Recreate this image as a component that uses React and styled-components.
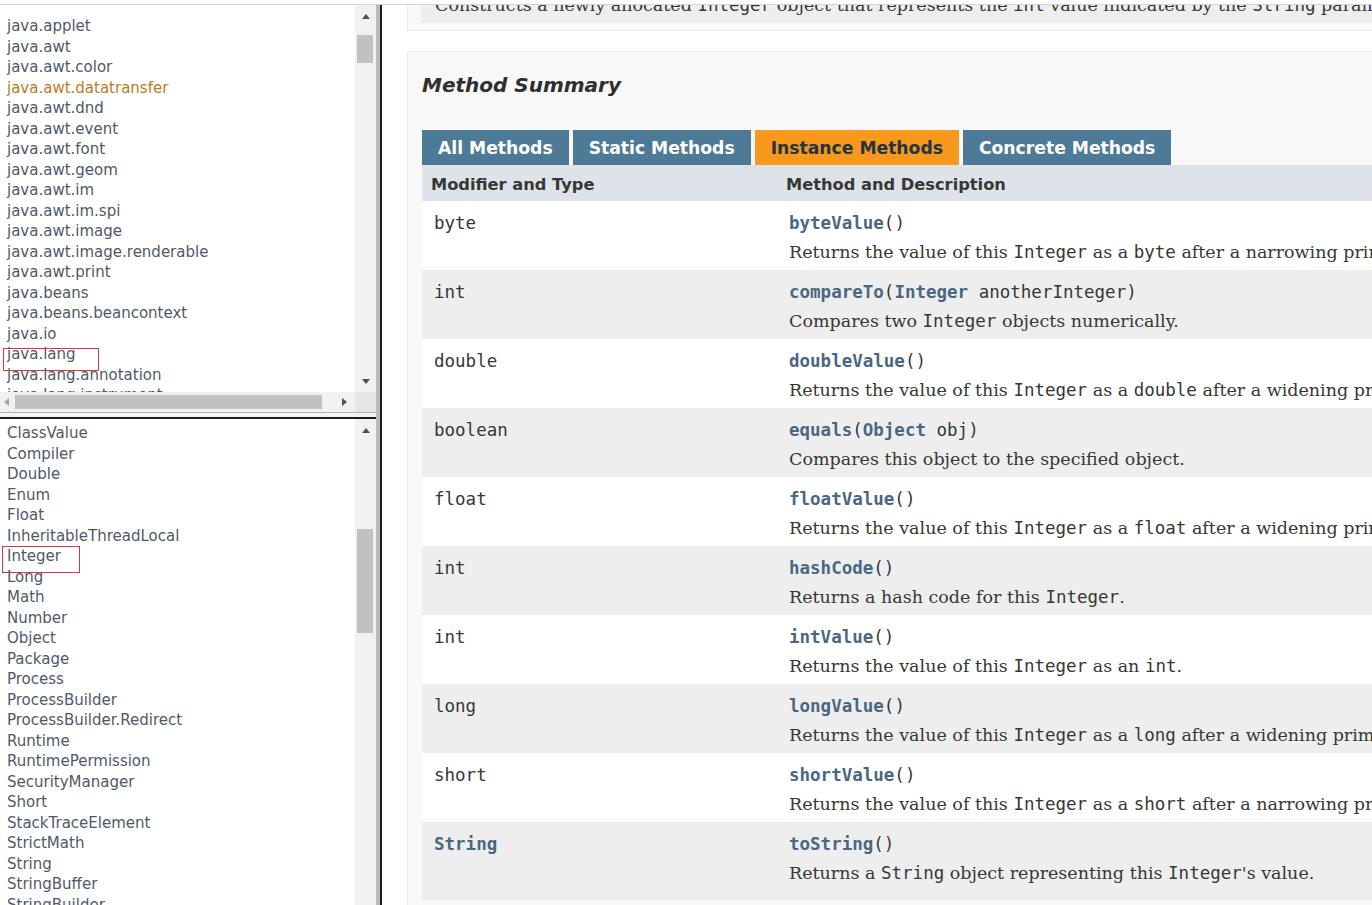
import React from "react";
import styled, { createGlobalStyle } from "styled-components";

const Global = createGlobalStyle`
  html, body { margin: 0; padding: 0; background: #fff; overflow: hidden; }
  * { box-sizing: border-box; }
  #root { width: 1372px; height: 905px; }
`;

const SANS = `'DejaVu Sans', 'Liberation Sans', Arial, sans-serif`;
const SERIF = `'DejaVu Serif', 'Liberation Serif', Georgia, serif`;
const MONO = `'DejaVu Sans Mono', 'Liberation Mono', monospace`;
const LINK = "#4A6782";
const INK = "#353833";

const Page = styled.div`
  width: 1372px;
  height: 905px;
  display: flex;
  flex-direction: column;
  overflow: hidden;
  background: #fff;
`;

const TopEdge = styled.div`
  flex: none;
  height: 5px;
  background: #fff;
  border-bottom: 1px solid #d6d6d6;
`;

const Frameset = styled.div`
  flex: 1;
  min-height: 0;
  display: flex;
`;

const LeftFrames = styled.div`
  flex: none;
  width: 376px;
  display: flex;
  flex-direction: column;
`;

const VDivider = styled.div`
  flex: none;
  width: 6px;
  background: #bdbdbd;
  border-right: 2px solid #1c1c1c;
`;

const TopFrame = styled.div`
  flex: none;
  height: 408px;
  display: flex;
  flex-direction: column;
`;

const FrameBody = styled.div`
  flex: 1;
  min-height: 0;
  display: flex;
`;

const HSeparator = styled.div`
  flex: none;
  height: 6px;
  background: #f4f4f4;
  border-bottom: 2px solid #1c1c1c;
`;

const BottomFrame = styled.div`
  flex: 1;
  min-height: 0;
  display: flex;
`;

const List = styled.ul`
  flex: 1;
  min-width: 0;
  margin: 0;
  padding: ${(p) => p.$top}px 0 0 0;
  list-style: none;
  overflow: hidden;
  background: #fff;
`;

const Item = styled.li`
  position: relative;
  padding-left: 7px;
  font-family: ${SANS};
  font-size: 15px;
  line-height: 20.5px;
  white-space: nowrap;
  color: ${(p) => (p.$hover ? "#bb7a2a" : "#4e5a68")};

  &::after {
    content: "";
    display: ${(p) => (p.$box ? "block" : "none")};
    position: absolute;
    left: ${(p) => (p.$box ? p.$box.l : 0)}px;
    top: ${(p) => (p.$box ? p.$box.t : 0)}px;
    width: ${(p) => (p.$box ? p.$box.w : 0)}px;
    height: ${(p) => (p.$box ? p.$box.h : 0)}px;
    border: 1px solid #d23c3c;
    pointer-events: none;
  }
`;

const VScroll = styled.div`
  flex: none;
  width: 21px;
  background: #f1f1f1;
  display: flex;
  flex-direction: column;
`;

const ScrollBtn = styled.div`
  flex: none;
  height: 22px;
  display: flex;
  align-items: center;
  justify-content: center;
`;

const Thumb = styled.div`
  flex: none;
  margin: ${(p) => p.$offset}px 3px 0 2px;
  height: ${(p) => p.$size}px;
  background: #c1c1c1;
`;

const Spacer = styled.div`
  flex: 1;
`;

const ArrowUp = styled.span`
  width: 0;
  height: 0;
  border-left: 4.5px solid transparent;
  border-right: 4.5px solid transparent;
  border-bottom: 5px solid #505050;
`;

const ArrowDown = styled.span`
  width: 0;
  height: 0;
  border-left: 4.5px solid transparent;
  border-right: 4.5px solid transparent;
  border-top: 5px solid #505050;
`;

const ArrowLeft = styled.span`
  width: 0;
  height: 0;
  border-top: 4.5px solid transparent;
  border-bottom: 4.5px solid transparent;
  border-right: 5px solid #a3a3a3;
`;

const ArrowRight = styled.span`
  width: 0;
  height: 0;
  border-top: 4.5px solid transparent;
  border-bottom: 4.5px solid transparent;
  border-left: 5px solid #505050;
`;

const HScroll = styled.div`
  flex: none;
  height: 21px;
  display: flex;
  align-items: stretch;
  background: #f1f1f1;
  border-bottom: 1px solid #adadad;
`;

const HBtn = styled.div`
  flex: none;
  width: ${(p) => p.$w}px;
  display: flex;
  align-items: center;
  justify-content: center;
`;

const HThumb = styled.div`
  flex: none;
  width: ${(p) => p.$size}px;
  margin: 3px 0 3px ${(p) => p.$offset}px;
  background: #c1c1c1;
`;

const Corner = styled.div`
  flex: none;
  width: 21px;
  background: #e6e6e6;
`;

/* ---------- right frame ---------- */

const RightFrame = styled.div`
  flex: 1;
  min-width: 0;
  overflow: hidden;
  background: #fff;
  padding-left: 25px;
  color: ${INK};
`;

const Content = styled.div`
  width: 1500px;
`;

const PrevBlock = styled.div`
  margin-top: -11px;
  padding: 0 14px 7px 13px;
  background: #f8f8f8;
  border: 1px solid #ededed;
  border-top: none;
`;

const PrevInner = styled.div`
  background: #eeeeee;
  padding: 0 14px 7px 14px;
`;

const Block = styled.div`
  font-family: ${SERIF};
  font-size: 17.5px;
  line-height: 22px;
  white-space: nowrap;
  color: ${INK};
`;

const Code = styled.code`
  font-family: ${MONO};
  font-size: 17.5px;
  color: ${(p) => (p.$link ? LINK : INK)};
  font-weight: ${(p) => (p.$bold ? "bold" : "normal")};
`;

const Summary = styled.div`
  margin-top: 20px;
  padding: 0 14px 20px 14px;
  background: #f8f8f8;
  border: 1px solid #ededed;
`;

const Heading = styled.h3`
  margin: 21px 0 33px 0;
  font-family: ${SANS};
  font-size: 20px;
  line-height: 24px;
  font-weight: bold;
  font-style: italic;
  color: #2f2f2f;
`;

const Tabs = styled.div`
  display: flex;
  gap: 4px;
  height: 35px;
`;

const Tab = styled.span`
  padding: 1px 16px 0 16px;
  line-height: 34px;
  font-family: ${SANS};
  font-size: 17.2px;
  font-weight: bold;
  white-space: nowrap;
  background: ${(p) => (p.$active ? "#F8981D" : "#4D7A97")};
  color: ${(p) => (p.$active ? "#253441" : "#ffffff")};
`;

const Table = styled.div`
  display: flex;
  flex-direction: column;
`;

const HeadRow = styled.div`
  display: grid;
  grid-template-columns: 355px 1fr;
  height: 36px;
  background: #dee3e9;
`;

const HeadCell = styled.div`
  padding: 4px 9px 0 9px;
  line-height: 32px;
  font-family: ${SANS};
  font-size: 16.25px;
  font-weight: bold;
  color: ${INK};
  white-space: nowrap;
`;

const Row = styled.div`
  display: grid;
  grid-template-columns: 355px 1fr;
  background: ${(p) => (p.$alt ? "#eeeeef" : "#ffffff")};
  padding-bottom: ${(p) => (p.$last ? 9 : 0)}px;
`;

const Cell = styled.div`
  padding: 11px 0 7px 12px;
  white-space: nowrap;
`;

const Sig = styled.div`
  line-height: 23px;
  font-family: ${MONO};
  font-size: 17.5px;
`;

const Desc = styled(Block)`
  margin-top: 6px;
`;

const packages = [
  "java.applet",
  "java.awt",
  "java.awt.color",
  "java.awt.datatransfer",
  "java.awt.dnd",
  "java.awt.event",
  "java.awt.font",
  "java.awt.geom",
  "java.awt.im",
  "java.awt.im.spi",
  "java.awt.image",
  "java.awt.image.renderable",
  "java.awt.print",
  "java.beans",
  "java.beans.beancontext",
  "java.io",
  "java.lang",
  "java.lang.annotation",
  "java.lang.instrument",
];

const classes = [
  "ClassValue",
  "Compiler",
  "Double",
  "Enum",
  "Float",
  "InheritableThreadLocal",
  "Integer",
  "Long",
  "Math",
  "Number",
  "Object",
  "Package",
  "Process",
  "ProcessBuilder",
  "ProcessBuilder.Redirect",
  "Runtime",
  "RuntimePermission",
  "SecurityManager",
  "Short",
  "StackTraceElement",
  "StrictMath",
  "String",
  "StringBuffer",
  "StringBuilder",
];

const pkgBoxes = { "java.lang": { l: 3, t: 4, w: 94, h: 21 } };
const clsBoxes = { Integer: { l: 2, t: 0, w: 76, h: 25 } };

const I = () => <Code>Integer</Code>;

const methods = [
  {
    type: "byte",
    name: "byteValue",
    args: null,
    desc: (
      <>
        Returns the value of this <I /> as a <Code>byte</Code> after a narrowing primitive conversion.
      </>
    ),
  },
  {
    type: "int",
    name: "compareTo",
    args: (
      <>
        <Code $link $bold>Integer</Code>
        <Code> anotherInteger</Code>
      </>
    ),
    desc: (
      <>
        Compares two <I /> objects numerically.
      </>
    ),
  },
  {
    type: "double",
    name: "doubleValue",
    args: null,
    desc: (
      <>
        Returns the value of this <I /> as a <Code>double</Code> after a widening primitive conversion.
      </>
    ),
  },
  {
    type: "boolean",
    name: "equals",
    args: (
      <>
        <Code $link $bold>Object</Code>
        <Code> obj</Code>
      </>
    ),
    desc: <>Compares this object to the specified object.</>,
  },
  {
    type: "float",
    name: "floatValue",
    args: null,
    desc: (
      <>
        Returns the value of this <I /> as a <Code>float</Code> after a widening primitive conversion.
      </>
    ),
  },
  {
    type: "int",
    name: "hashCode",
    args: null,
    desc: (
      <>
        Returns a hash code for this <I />.
      </>
    ),
  },
  {
    type: "int",
    name: "intValue",
    args: null,
    desc: (
      <>
        Returns the value of this <I /> as an <Code>int</Code>.
      </>
    ),
  },
  {
    type: "long",
    name: "longValue",
    args: null,
    desc: (
      <>
        Returns the value of this <I /> as a <Code>long</Code> after a widening primitive conversion.
      </>
    ),
  },
  {
    type: "short",
    name: "shortValue",
    args: null,
    desc: (
      <>
        Returns the value of this <I /> as a <Code>short</Code> after a narrowing primitive conversion.
      </>
    ),
  },
  {
    type: "String",
    typeLink: true,
    name: "toString",
    args: null,
    desc: (
      <>
        Returns a <Code>String</Code> object representing this <I />'s value.
      </>
    ),
  },
];

export default function App() {
  return (
    <Page>
      <Global />
      <TopEdge />
      <Frameset>
        <LeftFrames>
          <TopFrame>
            <FrameBody>
              <List $top={11}>
                {packages.map((p) => (
                  <Item key={p} $hover={p === "java.awt.datatransfer"} $box={pkgBoxes[p]}>
                    {p}
                  </Item>
                ))}
              </List>
              <VScroll>
                <ScrollBtn>
                  <ArrowUp />
                </ScrollBtn>
                <Thumb $offset={8} $size={28} />
                <Spacer />
                <ScrollBtn>
                  <ArrowDown />
                </ScrollBtn>
              </VScroll>
            </FrameBody>
            <HScroll>
              <HBtn $w={12}>
                <ArrowLeft />
              </HBtn>
              <HThumb $offset={3} $size={307} />
              <Spacer />
              <HBtn $w={22}>
                <ArrowRight />
              </HBtn>
              <Corner />
            </HScroll>
          </TopFrame>
          <HSeparator />
          <BottomFrame>
            <List $top={4}>
              {classes.map((c) => (
                <Item key={c} $box={clsBoxes[c]}>
                  {c}
                </Item>
              ))}
            </List>
            <VScroll>
              <ScrollBtn>
                <ArrowUp />
              </ScrollBtn>
              <Thumb $offset={88} $size={104} />
            </VScroll>
          </BottomFrame>
        </LeftFrames>
        <VDivider />
        <RightFrame>
          <Content>
            <PrevBlock>
              <PrevInner>
                <Block>
                  Constructs a newly allocated <I /> object that represents the <Code>int</Code> value
                  indicated by the <Code>String</Code> parameter.
                </Block>
              </PrevInner>
            </PrevBlock>
            <Summary>
              <Heading>Method Summary</Heading>
              <Tabs>
                <Tab>All Methods</Tab>
                <Tab>Static Methods</Tab>
                <Tab $active>Instance Methods</Tab>
                <Tab>Concrete Methods</Tab>
              </Tabs>
              <Table>
                <HeadRow>
                  <HeadCell>Modifier and Type</HeadCell>
                  <HeadCell>Method and Description</HeadCell>
                </HeadRow>
                {methods.map((m, i) => (
                  <Row key={m.name} $alt={i % 2 === 1} $last={i === methods.length - 1}>
                    <Cell>
                      <Sig>
                        <Code $link={m.typeLink} $bold={m.typeLink}>
                          {m.type}
                        </Code>
                      </Sig>
                    </Cell>
                    <Cell>
                      <Sig>
                        <Code $link $bold>
                          {m.name}
                        </Code>
                        <Code>(</Code>
                        {m.args}
                        <Code>)</Code>
                      </Sig>
                      <Desc>{m.desc}</Desc>
                    </Cell>
                  </Row>
                ))}
              </Table>
            </Summary>
          </Content>
        </RightFrame>
      </Frameset>
    </Page>
  );
}
